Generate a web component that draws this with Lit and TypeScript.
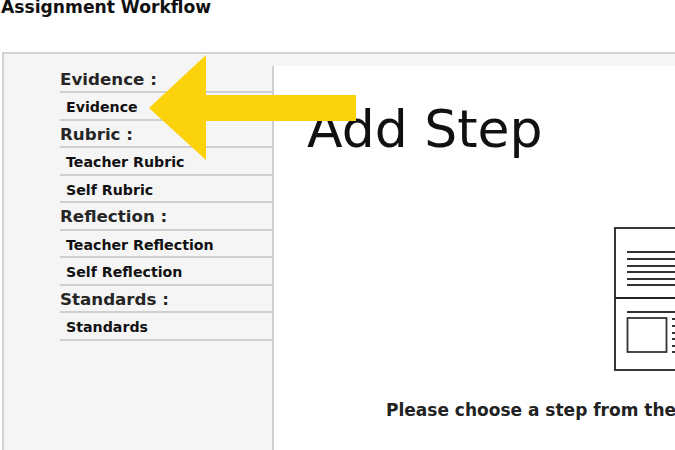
import { LitElement, html, css, svg } from "lit";
import { customElement } from "lit/decorators.js";

const groups: { title: string; items: string[] }[] = [
  { title: "Evidence :", items: ["Evidence"] },
  { title: "Rubric :", items: ["Teacher Rubric", "Self Rubric"] },
  { title: "Reflection :", items: ["Teacher Reflection", "Self Reflection"] },
  { title: "Standards :", items: ["Standards"] },
];

@customElement("app-root")
export class AppRoot extends LitElement {
  static styles = css`
    :host {
      display: block;
      position: relative;
      width: 675px;
      height: 450px;
      overflow: hidden;
      background: #fff;
      font-family: "DejaVu Sans", Verdana, sans-serif;
      color: #1a1a1a;
    }
    .title {
      margin: 0;
      height: 52px;
      padding-left: 1px;
      font-size: 17.15px;
      line-height: 15px;
      font-weight: 700;
      color: #111;
      white-space: nowrap;
    }
    .frame {
      display: flex;
      margin-left: 2px;
      width: 800px;
      height: 398px;
      box-sizing: border-box;
      padding-top: 12px;
      border-top: 2px solid #d2d2d2;
      border-left: 2px solid #d2d2d2;
      background: #f5f5f5;
    }
    .side {
      box-sizing: border-box;
      flex: none;
      width: 270px;
      padding-left: 56px;
      border-right: 2px solid #cfcfcf;
    }
    .list {
      margin-top: -0.5px;
    }
    .row {
      box-sizing: border-box;
      height: 27.5px;
      display: flex;
      align-items: center;
      padding-top: 3px;
      border-bottom: 2px solid #cfcfcf;
      white-space: nowrap;
    }
    .head {
      padding-top: 1px;
      font-size: 16.7px;
      font-weight: 700;
      color: #262626;
    }
    .item {
      padding-left: 6px;
      font-size: 14.2px;
      font-weight: 700;
      color: #111;
    }
    .main {
      flex: 1;
      background: #fff;
      padding-left: 33px;
      display: flex;
      flex-direction: column;
    }
    h2 {
      margin: 30px 0 0;
      font-size: 52px;
      line-height: 66px;
      font-weight: 400;
      color: #111;
      white-space: nowrap;
    }
    .sheet {
      display: block;
      margin: 65px 0 0 307px;
    }
    .hint {
      margin: 28px 0 0 79px;
      font-size: 17px;
      line-height: 22px;
      font-weight: 700;
      color: #222;
      white-space: nowrap;
    }
    .arrow {
      position: absolute;
      left: 149px;
      top: 55px;
    }
  `;

  private sheet() {
    const top = [252, 259, 266, 272, 279, 285];
    const small = [319, 326, 333, 339, 346, 352];
    return svg`
      <rect x="1" y="1" width="200" height="142" fill="#fff" stroke="#222" stroke-width="1.8" />
      <line x1="1" x2="201" y1="71" y2="71" stroke="#222" stroke-width="1.8" />
      ${top.map(
        (y) => svg`<line x1="13" x2="201" y1=${y - 227} y2=${y - 227} stroke="#333" stroke-width="1.8" />`
      )}
      <line x1="13" x2="201" y1="85" y2="85" stroke="#333" stroke-width="1.8" />
      <rect x="13.5" y="91" width="39" height="34" fill="none" stroke="#333" stroke-width="1.8" />
      ${small.map(
        (y) => svg`<line x1="58" x2="201" y1=${y - 227} y2=${y - 227} stroke="#333" stroke-width="1.8" />`
      )}
    `;
  }

  render() {
    return html`
      <h1 class="title">Assignment Workflow</h1>
      <div class="frame">
        <nav class="side">
          <div class="list">
            ${groups.map(
              (g) => html`
                <div class="row head">${g.title}</div>
                ${g.items.map((i) => html`<div class="row item">${i}</div>`)}
              `
            )}
          </div>
        </nav>
        <section class="main">
          <h2>Add Step</h2>
          <svg class="sheet" width="202" height="144" viewBox="0 0 202 144">${this.sheet()}</svg>
          <div class="hint">Please choose a step from the</div>
        </section>
      </div>
      <svg class="arrow" width="208" height="106" viewBox="0 0 208 106">
        <polygon points="0,53 57,0 57,40 207,40 207,66 57,66 57,105" fill="#fcd20a" />
      </svg>
    `;
  }
}
